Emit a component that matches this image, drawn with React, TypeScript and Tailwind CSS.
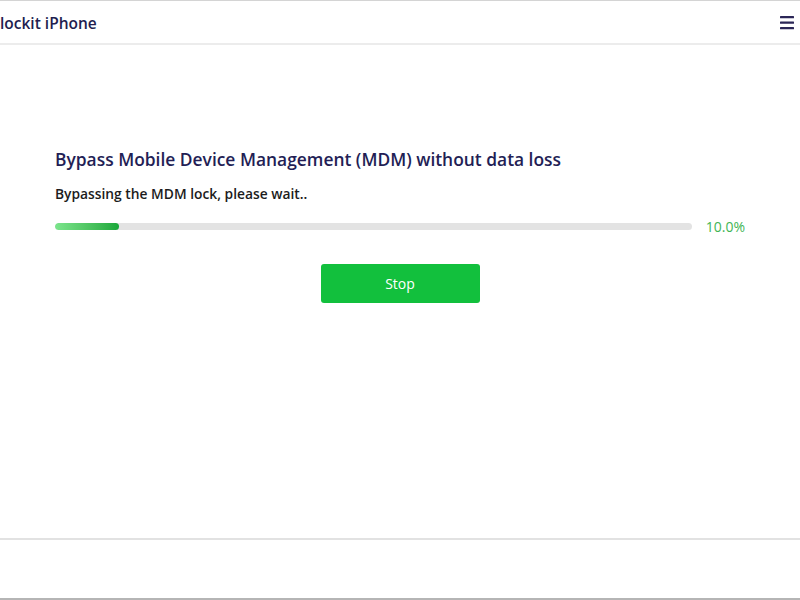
import React from 'react';

const progress = 10;

export default function App() {
  return (
    <div
      className="flex h-[600px] w-[800px] flex-col overflow-hidden bg-white"
      style={{ fontFamily: '"Open Sans", "Noto Sans", sans-serif' }}
    >
      <header className="flex h-[45px] shrink-0 items-center justify-between border-t border-b-2 border-t-[#d4d4d4] border-b-[#ececec] pt-[4px] pr-[6px]">
        <span className="text-[15.5px] font-semibold text-[#221d4f]">lockit iPhone</span>
        <svg width="14" height="15" viewBox="0 0 14 15" className="mb-[4px] text-[#2b2657]">
          <rect x="0" y="1" width="14" height="2.2" rx="0.5" fill="currentColor" />
          <rect x="0" y="6.5" width="14" height="2.2" rx="0.5" fill="currentColor" />
          <rect x="0" y="12" width="14" height="2.2" rx="0.5" fill="currentColor" />
        </svg>
      </header>

      <main className="flex flex-1 flex-col px-[55px] pt-[101px]">
        <h1 className="text-[17.4px] font-semibold leading-[26px] text-[#231e55]">
          Bypass Mobile Device Management (MDM) without data loss
        </h1>
        <p className="mt-[12px] text-[13.8px] font-semibold leading-[20px] text-[#1c1c1c]">
          Bypassing the MDM lock, please wait..
        </p>
        <div className="mt-[12px] flex items-center gap-[14px]">
          <div className="h-[7px] w-[638px] overflow-hidden rounded-full bg-[#e3e3e3]">
            <div
              className="h-full rounded-full bg-gradient-to-r from-[#7be58c] to-[#16a83a]"
              style={{ width: `${progress}%` }}
            />
          </div>
          <span className="text-[14px] text-[#3fb555]">{progress.toFixed(1)}%</span>
        </div>
        <div className="mt-[27px] flex justify-center">
          <button
            type="button"
            className="h-[39px] w-[159px] rounded-[3px] bg-[#12c03d] text-[14px] text-white"
          >
            Stop
          </button>
        </div>
      </main>

      <footer className="h-[62px] shrink-0 border-t-2 border-b-2 border-t-[#e2e2e2] border-b-[#b5b5b5]" />
    </div>
  );
}
